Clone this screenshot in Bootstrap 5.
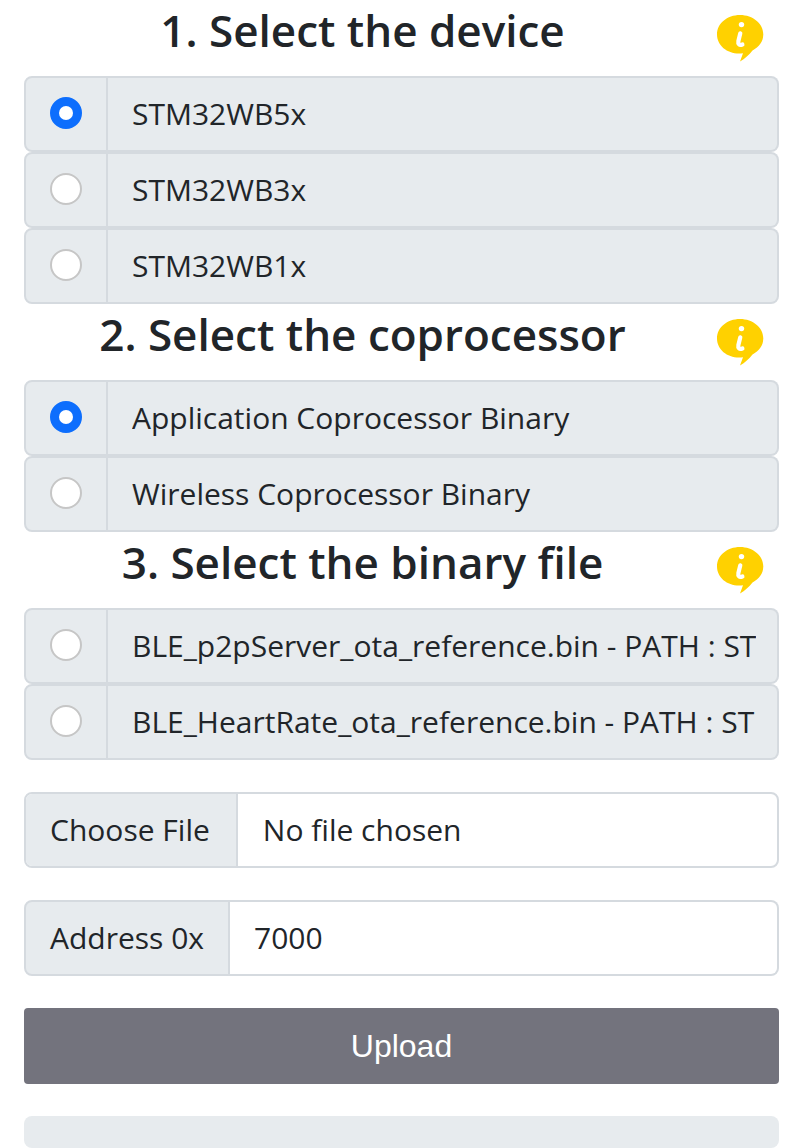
<!DOCTYPE html>
<html lang="en">
<head>
<meta charset="utf-8">
<meta name="viewport" content="width=device-width, initial-scale=1">
<title>Firmware update</title>
<link href="https://cdn.jsdelivr.net/npm/bootstrap@5.3.0/dist/css/bootstrap.min.css" rel="stylesheet">
<style>
  body { font-family: "Open Sans", "Noto Sans", sans-serif; font-size: 30px; color: #212529; background: #fff; overflow-x: hidden; }
  .page { padding: 0 23px 0 24px; }
  .step-head { height: 76px; }
  .step-title { font-size: 44px; line-height: 60px; font-weight: 600; }
  .info-col { width: 78px; }
  .info-btn { width: 48px; height: 48px; margin-top: 14px; }
  .info-btn svg { display: block; width: 48px; height: 48px; }
  .field { height: 76px; }
  .field .input-group-text, .field .form-control, .file-field {
    font-size: 30px; line-height: 44px; padding: 0 24px; border: 2px solid #d5dadf; border-radius: 8px; color: #212529;
  }
  .field .input-group-text, .option .form-control { background: #e7ebee; }
  .field .form-control { min-width: 0; text-overflow: clip; }
  .option .form-control { padding-right: 21px; }
  .option .input-group-text { width: 84px; }
  .option .form-check-input { width: 32px; height: 32px; border: 2px solid #c6c6c6; background-color: #fff; margin: 0 0 2px; }
  .option .form-check-input:checked { background-color: #0d6efd; border-color: #0d6efd; }
  .file-field { height: 76px; line-height: 72px; }
  .file-field::file-selector-button { padding: 0 26px 0 24px; margin: 0 25px 0 -24px; line-height: 72px; height: 72px; background: #e7ebee; border-color: #d5dadf; border-inline-end-width: 2px; color: #212529; }
  .stack { gap: 32px; margin-top: 32px; }
  .upload-btn { height: 76px; padding: 0; border: 0; border-radius: 4px; background: #73737d; color: #fff; font: 32px "Liberation Sans", Arial, sans-serif; }
  .upload-btn:hover { background: #62626b; color: #fff; }
  .upload-progress { height: 32px; border-radius: 8px; background: #e7ebee; }
</style>
</head>
<body>
<svg class="d-none" aria-hidden="true">
  <symbol id="info" viewBox="0 0 48 48">
    <path fill="#ffd100" d="M24 1C11 1 1 9.500 1 20.500S11 39.500 23 39.500c1.500 0 2.700 0 4-.2L24 47.500c5-3 9-6.500 12.500-11C43 33 47.300 27.500 47.300 20.500 47.300 9.500 37 1 24 1z"/>
    <circle cx="25.500" cy="10.600" r="2.700" fill="#fff"/>
    <path fill="none" stroke="#fff" stroke-width="4.200" stroke-linecap="round" stroke-linejoin="round" d="M24.300 19.300L22.400 27c-.6 3 .8 4.800 4 3.500"/>
  </symbol>
</svg>
<main class="container-fluid page">
  <form>
    <section>
      <div class="step-head d-flex">
        <h1 class="step-title flex-grow-1 text-center m-0" id="t1">1. Select the device</h1>
        <div class="info-col d-flex justify-content-center"><button type="button" class="info-btn btn p-0 border-0" aria-label="About devices"><svg><use href="#info"/></svg></button></div>
      </div>
      <div role="radiogroup" aria-labelledby="t1">
        <div class="input-group field option flex-nowrap">
          <div class="input-group-text justify-content-center"><input class="form-check-input" type="radio" name="device" aria-labelledby="d1" checked></div>
          <input class="form-control ms-0 border-start-0" id="d1" type="text" value="STM32WB5x" aria-label="STM32WB5x" readonly>
        </div>
        <div class="input-group field option flex-nowrap">
          <div class="input-group-text justify-content-center"><input class="form-check-input" type="radio" name="device" aria-labelledby="d2"></div>
          <input class="form-control ms-0 border-start-0" id="d2" type="text" value="STM32WB3x" aria-label="STM32WB3x" readonly>
        </div>
        <div class="input-group field option flex-nowrap">
          <div class="input-group-text justify-content-center"><input class="form-check-input" type="radio" name="device" aria-labelledby="d3"></div>
          <input class="form-control ms-0 border-start-0" id="d3" type="text" value="STM32WB1x" aria-label="STM32WB1x" readonly>
        </div>
      </div>
    </section>
    <section>
      <div class="step-head d-flex">
        <h1 class="step-title flex-grow-1 text-center m-0" id="t2">2. Select the coprocessor</h1>
        <div class="info-col d-flex justify-content-center"><button type="button" class="info-btn btn p-0 border-0" aria-label="About coprocessors"><svg><use href="#info"/></svg></button></div>
      </div>
      <div role="radiogroup" aria-labelledby="t2">
        <div class="input-group field option flex-nowrap">
          <div class="input-group-text justify-content-center"><input class="form-check-input" type="radio" name="core" aria-labelledby="c1" checked></div>
          <input class="form-control ms-0 border-start-0" id="c1" type="text" value="Application Coprocessor Binary" aria-label="Application Coprocessor Binary" readonly>
        </div>
        <div class="input-group field option flex-nowrap">
          <div class="input-group-text justify-content-center"><input class="form-check-input" type="radio" name="core" aria-labelledby="c2"></div>
          <input class="form-control ms-0 border-start-0" id="c2" type="text" value="Wireless Coprocessor Binary" aria-label="Wireless Coprocessor Binary" readonly>
        </div>
      </div>
    </section>
    <section>
      <div class="step-head d-flex">
        <h1 class="step-title flex-grow-1 text-center m-0" id="t3">3. Select the binary file</h1>
        <div class="info-col d-flex justify-content-center"><button type="button" class="info-btn btn p-0 border-0" aria-label="About binary files"><svg><use href="#info"/></svg></button></div>
      </div>
      <div role="radiogroup" aria-labelledby="t3">
        <div class="input-group field option flex-nowrap">
          <div class="input-group-text justify-content-center"><input class="form-check-input" type="radio" name="binary" aria-labelledby="b1"></div>
          <input class="form-control ms-0 border-start-0" id="b1" type="text" value="BLE_p2pServer_ota_reference.bin - PATH : ST" aria-label="BLE_p2pServer_ota_reference.bin" readonly>
        </div>
        <div class="input-group field option flex-nowrap">
          <div class="input-group-text justify-content-center"><input class="form-check-input" type="radio" name="binary" aria-labelledby="b2"></div>
          <input class="form-control ms-0 border-start-0" id="b2" type="text" value="BLE_HeartRate_ota_reference.bin - PATH : ST" aria-label="BLE_HeartRate_ota_reference.bin" readonly>
        </div>
      </div>
    </section>
    <div class="stack d-flex flex-column">
      <input class="form-control file-field" type="file" aria-label="Binary file">
      <div class="input-group field flex-nowrap">
        <label class="input-group-text" for="address">Address 0x</label>
        <input class="form-control ms-0 border-start-0" id="address" type="text" value="7000">
      </div>
      <button type="button" class="btn upload-btn w-100">Upload</button>
      <div class="progress upload-progress" role="progressbar" aria-label="Upload progress" aria-valuenow="0" aria-valuemin="0" aria-valuemax="100"><div class="progress-bar" style="width: 0%"></div></div>
    </div>
  </form>
</main>
<script src="https://cdn.jsdelivr.net/npm/bootstrap@5.3.0/dist/js/bootstrap.bundle.min.js"></script>
</body>
</html>
